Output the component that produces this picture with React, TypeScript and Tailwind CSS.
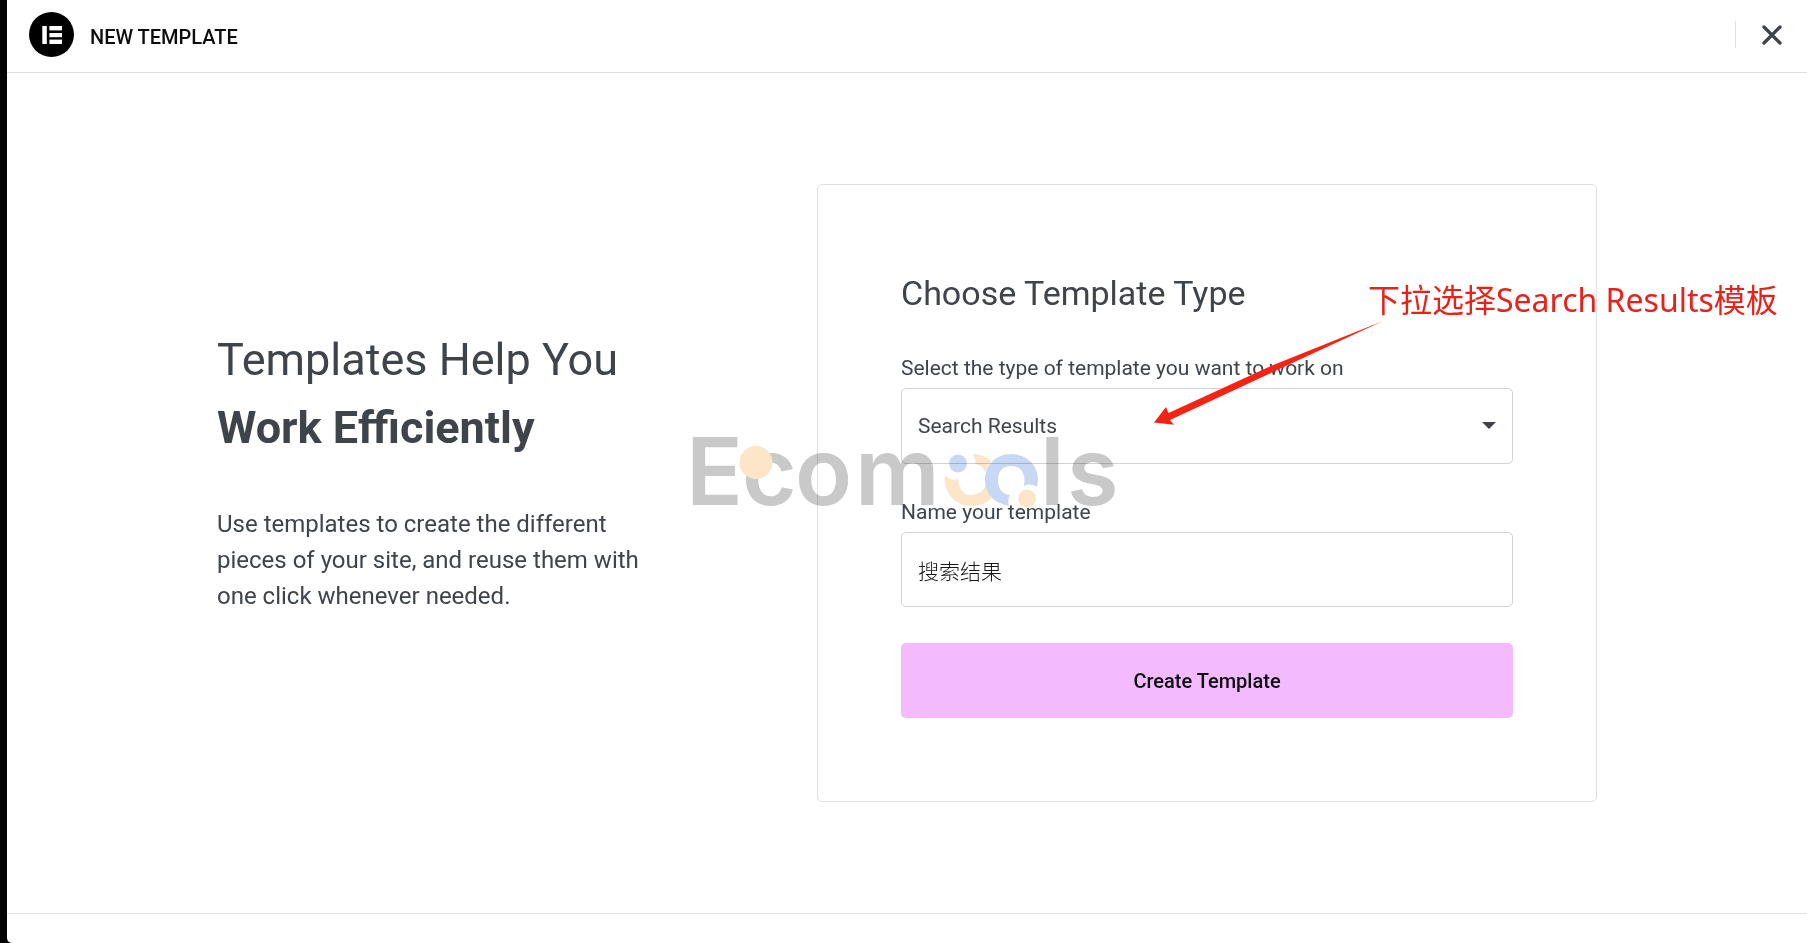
import React from "react";

function ElementorMark() {
  return (
    <svg viewBox="0 0 45 45" className="size-[45px] shrink-0" aria-hidden="true">
      <circle cx="22.5" cy="22.5" r="22.5" fill="#000" />
      <g fill="#fff">
        <rect x="13.3" y="14" width="4.5" height="18" />
        <rect x="20.4" y="14" width="12.6" height="4.4" />
        <rect x="20.4" y="21" width="12.6" height="4.2" />
        <rect x="20.4" y="27.6" width="12.6" height="4.4" />
      </g>
    </svg>
  );
}

function Header() {
  return (
    <header className="flex h-[73px] items-center justify-between border-b border-[#e0e1e3] pb-[3px] pr-[22px] pl-[22px]">
      <div className="flex items-center gap-4">
        <ElementorMark />
        <h1 className="pt-1 text-[20px] leading-6 font-medium text-[#0c0d0e]">NEW TEMPLATE</h1>
      </div>
      <div className="flex items-center border-l border-[#e0e1e3] pl-[22px]">
        <button type="button" aria-label="Close" className="flex h-[27px] w-[27px] items-center justify-center">
          <svg viewBox="0 0 20 20" className="size-5" aria-hidden="true">
            <path d="M2 2 L18 18 M18 2 L2 18" stroke="#3f444b" strokeWidth="3.3" strokeLinecap="round" />
          </svg>
        </button>
      </div>
    </header>
  );
}

function Intro() {
  return (
    <section className="flex-1 pb-[46px] text-[#3f444b]">
      <h2 className="text-[45px] leading-[68px]">
        Templates Help You
        <br />
        <strong className="font-bold">Work Efficiently</strong>
      </h2>
      <p className="mt-11 max-w-[440px] text-[24px] leading-9">
        Use templates to create the different pieces of your site, and reuse them with one click whenever needed.
      </p>
    </section>
  );
}

function TemplateForm() {
  return (
    <form
      className="flex w-[780px] flex-col gap-9 rounded-[5px] border border-[#e0e1e3] px-[83px] pt-[87px] pb-[83px] text-[#3f444b]"
      onSubmit={(e) => e.preventDefault()}
    >
      <h3 className="mb-[6px] text-[34px] leading-[42px]">Choose Template Type</h3>
      <div className="flex flex-col gap-2">
        <label htmlFor="type" className="text-[21px] leading-6">
          Select the type of template you want to work on
        </label>
        <div className="relative">
          <select
            id="type"
            defaultValue="Search Results"
            className="h-[76px] w-full appearance-none rounded-[5px] border border-[#d0d2d5] bg-white px-4 pt-[2px] text-[21px] text-[#3f444b]"
          >
            <option>Search Results</option>
          </select>
          <svg viewBox="0 0 14 7" className="pointer-events-none absolute top-[34px] right-[17px] h-[7px] w-[14px]" aria-hidden="true">
            <path d="M0 0H14L7 7Z" fill="#3f444b" />
          </svg>
        </div>
      </div>
      <div className="flex flex-col gap-2">
        <label htmlFor="name" className="text-[21px] leading-6">
          Name your template
        </label>
        <input
          id="name"
          defaultValue="搜索结果"
          className="h-[75px] w-full rounded-[5px] border border-[#d0d2d5] bg-white px-4 text-[21px] font-light text-[#15171a]"
        />
      </div>
      <button type="submit" className="h-[75px] rounded-[5px] bg-[#f3bafd] text-[20px] font-medium text-[#0c0d0e]">
        Create Template
      </button>
    </form>
  );
}

function Watermark() {
  return (
    <svg
      viewBox="0 0 440 120"
      className="pointer-events-none absolute top-[409px] left-[685px] h-[120px] w-[440px] mix-blend-multiply"
      aria-hidden="true"
    >
      <g transform="translate(0 15)">
        <g fill="#c9c9c9" fontFamily="Inter, sans-serif" fontWeight="600" fontSize="94">
          <text x="1 57 110 170" y="81">Ecom</text>
          <text x="355 382" y="81">ls</text>
        </g>
        <circle cx="71" cy="38.5" r="16.5" fill="#fde6c8" />
        <circle cx="273" cy="39.5" r="9" fill="#c6d8f4" />
        <path
          d="M260 51 C258 66 268 82 286 82 C296 82 304 78 308 72 L301 60 C299 67 293 71 286 71 C279 71 274 66 273 55 C268 57 263 55 260 51 Z M287 30 C295 30 301 32 306 37 L300 48 C298 43 295 41 290 40 C291 36 290 33 287 30 Z"
          fill="#fde6c8"
        />
        <path
          d="M324 82 C308 79 300 69 300 56 C300 41 311 30 326 30 C342 30 353 41 353 56 L352 63 C347 60 343 60 339 62 C341 49 336 42 326 42 C318 42 313 47 313 56 C313 65 317 70 325 71 C323 75 323 78 324 82 Z"
          fill="#c6d8f4"
        />
        <circle cx="342" cy="74.5" r="9" fill="#fde6c8" />
      </g>
    </svg>
  );
}

function Annotation() {
  return (
    <>
      <p className="pointer-events-none absolute top-[279px] left-[1368px] font-['Noto_Sans','Noto_Sans_CJK_SC',sans-serif] text-[32px] leading-[42px] whitespace-nowrap text-[#e8221a]">
        下拉选择Search Results模板
      </p>
      <svg
        viewBox="0 0 232 108"
        className="pointer-events-none absolute top-[319px] left-[1152px] h-[108px] w-[232px]"
        aria-hidden="true"
      >
        <path d="M2 103.5 L14 88 L16.5 94 L120 46.5 L231 2 L123 52 L18 101 L22 105.7 Z" fill="#f52314" />
      </svg>
    </>
  );
}

export default function App() {
  return (
    <div className="relative flex min-h-screen overflow-hidden bg-[#030304] pl-[7px] font-[Roboto,'Noto_Sans_CJK_SC',sans-serif]">
      <div className="flex flex-1 flex-col rounded-bl-[5px] bg-white">
        <Header />
        <main className="flex flex-1 items-center justify-center">
          <div className="flex w-full max-w-[1380px] items-center">
            <Intro />
            <TemplateForm />
          </div>
        </main>
        <footer className="h-[30px] border-t border-[#e0e1e3]" />
      </div>
      <Watermark />
      <Annotation />
    </div>
  );
}
